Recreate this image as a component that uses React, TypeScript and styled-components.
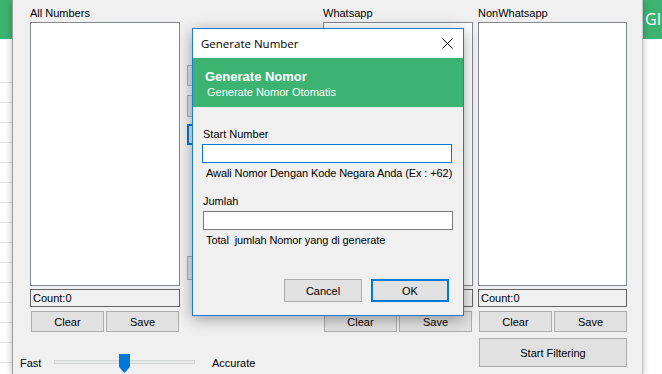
import React from "react";
import styled, { createGlobalStyle } from "styled-components";

const GlobalStyle = createGlobalStyle`
  html, body {
    margin: 0;
    padding: 0;
    background: #ffffff;
  }
  body {
    font-family: "Liberation Sans", Arial, sans-serif;
    font-size: 11px;
    color: #000;
  }
  * {
    box-sizing: border-box;
  }
`;

const Screen = styled.div`
  position: relative;
  display: flex;
  width: 662px;
  height: 374px;
  overflow: hidden;
  background: #ffffff;
`;

const BackApp = styled.div<{ $width: number }>`
  display: flex;
  flex-direction: column;
  width: ${(p) => p.$width}px;
  flex-shrink: 0;
  background: #ffffff;
`;

const BackHeader = styled.div`
  height: 39px;
  background: #3cb371;
  color: #ffffff;
  font-family: "Open Sans", "Liberation Sans", sans-serif;
  font-size: 16px;
  line-height: 39px;
  padding-left: 2px;
  white-space: nowrap;
  overflow: hidden;
`;

const BackRows = styled.div`
  display: flex;
  flex-direction: column;
  padding-top: 24px;
`;

const BackRow = styled.div`
  height: 20px;
  border-bottom: 1px solid #e3e3e3;
`;

const Window = styled.div`
  position: relative;
  z-index: 1;
  display: flex;
  gap: 5px;
  width: 631px;
  flex-shrink: 0;
  height: 374px;
  padding: 6px 0 0 7px;
  background: #f0f0f0;
  border-left: 1px solid #9d9d9d;
  border-right: 1px solid #c4c4c4;
  box-shadow: 0 0 7px rgba(0, 0, 0, 0.28);
`;

const LeftArea = styled.div`
  display: flex;
  flex-direction: column;
  width: 453px;
`;

const ColumnsRow = styled.div`
  display: flex;
`;

const Column = styled.div<{ $offset: number; $width: number }>`
  display: flex;
  flex-direction: column;
  margin-left: ${(p) => p.$offset}px;
  width: ${(p) => p.$width}px;
`;

const ColumnLabel = styled.div`
  height: 16px;
  line-height: 14px;
  font-size: 11px;
`;

const ListBox = styled.div`
  height: 264px;
  background: #ffffff;
  border: 1px solid #828790;
`;

const CountBox = styled.div`
  margin-top: 3px;
  height: 18px;
  padding-left: 2px;
  line-height: 16px;
  border: 1px solid #646464;
  background: #f0f0f0;
`;

const ButtonRow = styled.div`
  display: flex;
  gap: 2px;
  margin-top: 4px;
  padding-left: 1px;
`;

const WinButton = styled.button<{ $w?: number; $h?: number; $focus?: boolean }>`
  width: ${(p) => (p.$w ? `${p.$w}px` : "auto")};
  height: ${(p) => p.$h ?? 21}px;
  padding: 0;
  background: #e1e1e1;
  border: ${(p) => (p.$focus ? "2px solid #0078d7" : "1px solid #adadad")};
  border-radius: 0;
  font-family: "Liberation Sans", Arial, sans-serif;
  font-size: 11px;
  color: #000;
  flex-shrink: 0;
`;

const MidColumn = styled.div`
  display: flex;
  flex-direction: column;
  align-items: flex-start;
  margin-left: 7px;
  width: 130px;
  padding-top: 59px;
`;

const SliderRow = styled.div`
  display: flex;
  align-items: center;
  height: 20px;
  margin-top: 21px;
`;

const SliderText = styled.span<{ $width?: number; $gap?: number }>`
  width: ${(p) => (p.$width ? `${p.$width}px` : "auto")};
  margin-left: ${(p) => p.$gap ?? 0}px;
  font-size: 11px;
`;

const Track = styled.div`
  position: relative;
  width: 141px;
  height: 4px;
  margin-top: -2px;
  background: #e7eaea;
  border: 1px solid #d6d6d6;
`;

const Thumb = styled.svg`
  position: absolute;
  left: 64px;
  top: -7px;
`;

const Dialog = styled.div`
  position: absolute;
  z-index: 2;
  left: 179px;
  top: 28px;
  width: 272px;
  height: 288px;
  display: flex;
  flex-direction: column;
  background: #f0f0f0;
  border: 1px solid #1a7fd4;
  box-shadow: 0 3px 14px rgba(0, 0, 0, 0.35);
`;

const TitleBar = styled.div`
  display: flex;
  align-items: center;
  justify-content: space-between;
  height: 29px;
  padding: 0 10px 0 8px;
  background: #ffffff;
  font-family: "Open Sans", "Liberation Sans", sans-serif;
  font-size: 11.5px;
`;

const Banner = styled.div`
  height: 49px;
  padding: 11px 0 0 12px;
  background: #3cb371;
  color: #ffffff;
`;

const BannerTitle = styled.div`
  font-size: 13px;
  font-weight: bold;
  line-height: 16px;
`;

const BannerSub = styled.div`
  margin-left: 2px;
  font-size: 11px;
  line-height: 14px;
`;

const DialogBody = styled.div`
  display: flex;
  flex-direction: column;
  padding: 20px 14px 0 10px;
`;

const FieldLabel = styled.div<{ $gap?: number }>`
  margin-top: ${(p) => p.$gap ?? 0}px;
  line-height: 14px;
`;

const TextInput = styled.div<{ $focus?: boolean; $shift: number }>`
  margin-top: 3px;
  margin-left: ${(p) => p.$shift}px;
  width: 250px;
  height: 19px;
  background: #ffffff;
  border: 1px solid ${(p) => (p.$focus ? "#0078d7" : "#7a7a7a")};
`;

const Hint = styled.div`
  margin-top: 3px;
  padding-left: 3px;
  line-height: 14px;
  letter-spacing: -0.1px;
  white-space: nowrap;
`;

const DialogButtons = styled.div`
  display: flex;
  justify-content: flex-end;
  gap: 9px;
  margin-top: 32px;
`;

function ListColumn({
  label,
  offset,
  width,
  count = "Count:0",
  children,
}: {
  label: string;
  offset: number;
  width: number;
  count?: string;
  children?: React.ReactNode;
}) {
  return (
    <Column $offset={offset} $width={width}>
      <ColumnLabel>{label}</ColumnLabel>
      <ListBox />
      <CountBox>{count}</CountBox>
      <ButtonRow>
        <WinButton $w={73}>Clear</WinButton>
        <WinButton $w={73}>Save</WinButton>
      </ButtonRow>
      {children}
    </Column>
  );
}

export default function App() {
  const rows = Array.from({ length: 15 });
  return (
    <>
      <GlobalStyle />
      <Screen>
        <BackApp $width={12}>
          <BackHeader />
          <BackRows>
            {rows.map((_, i) => (
              <BackRow key={i} />
            ))}
          </BackRows>
        </BackApp>

        <Window>
          <LeftArea>
            <ColumnsRow>
              <ListColumn label="All Numbers" offset={10} width={150} />
              {/* buttons hidden behind the dialog */}
              <MidColumn>
                <WinButton $w={130} $h={21} />
                <WinButton $w={130} $h={22} style={{ marginTop: 9 }} />
                <WinButton $w={130} $h={21} $focus style={{ marginTop: 7 }} />
                <WinButton $w={130} $h={24} style={{ marginTop: 111 }} />
              </MidColumn>
              <ListColumn label="Whatsapp" offset={6} width={150} count="" />
            </ColumnsRow>
            <SliderRow>
              <SliderText $width={34}>Fast</SliderText>
              <Track>
                <Thumb width="11" height="19" viewBox="0 0 11 19">
                  <polygon points="0,0 11,0 11,13 5.5,19 0,13" fill="#0078d7" />
                </Thumb>
              </Track>
              <SliderText $gap={17}>Accurate</SliderText>
            </SliderRow>
          </LeftArea>

          <ListColumn label="NonWhatsapp" offset={0} width={149}>
            <WinButton $w={148} $h={29} style={{ marginTop: 6, marginLeft: 1 }}>
              Start Filtering
            </WinButton>
          </ListColumn>

          <Dialog>
            <TitleBar>
              <span>Generate Number</span>
              <svg width="11" height="11" viewBox="0 0 11 11">
                <path d="M0.5 0.5 L10.5 10.5 M10.5 0.5 L0.5 10.5" stroke="#000" strokeWidth="1" />
              </svg>
            </TitleBar>
            <Banner>
              <BannerTitle>Generate Nomor</BannerTitle>
              <BannerSub>Generate Nomor Otomatis</BannerSub>
            </Banner>
            <DialogBody>
              <FieldLabel>Start Number</FieldLabel>
              <TextInput $focus $shift={-1} />
              <Hint>Awali Nomor Dengan Kode Negara Anda (Ex : +62)</Hint>
              <FieldLabel $gap={14}>Jumlah</FieldLabel>
              <TextInput $shift={0} />
              <Hint>Total&nbsp; jumlah Nomor yang di generate</Hint>
              <DialogButtons>
                <WinButton $w={78} $h={23}>Cancel</WinButton>
                <WinButton $w={78} $h={23} $focus>OK</WinButton>
              </DialogButtons>
            </DialogBody>
          </Dialog>
        </Window>

        <BackApp $width={20}>
          <BackHeader>GI</BackHeader>
        </BackApp>
      </Screen>
    </>
  );
}
